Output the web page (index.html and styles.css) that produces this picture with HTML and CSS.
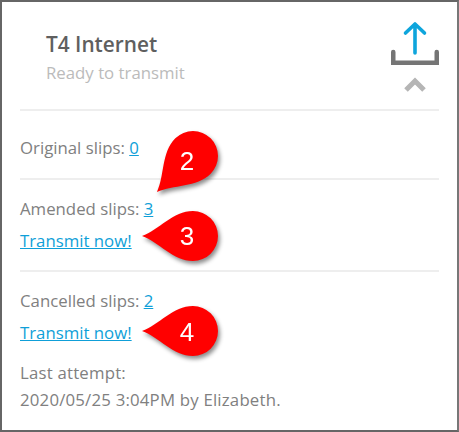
FILE: index.html
```html
<!DOCTYPE html>
<html lang="en">
<head>
<meta charset="utf-8">
<title>T4 Internet</title>
<link rel="stylesheet" href="styles.css">
</head>
<body>
<main class="card">
  <header class="head">
    <div class="titles">
      <h1 class="title">T4 Internet</h1>
      <p class="status">Ready to transmit</p>
    </div>
    <div class="icons">
      <svg class="upload" width="50" height="50" viewBox="0 0 50 50" aria-hidden="true">
        <path d="M26 6V35M16.500 15L26 6L35.500 15" fill="none" stroke="#0ea5dc" stroke-width="3.600" stroke-linecap="round" stroke-linejoin="round"/>
        <path d="M4.250 34V44.750H47.750V34" fill="none" stroke="#757575" stroke-width="4.500" stroke-linecap="round"/>
      </svg>
      <svg class="chevron" width="22" height="15" viewBox="0 0 22 15" aria-hidden="true">
        <path d="M2 13L11 4L20 13" fill="none" stroke="#b5b5b5" stroke-width="5"/>
      </svg>
    </div>
  </header>
  <section class="row row-original">
    <p class="line">Original slips: <a href="#">0</a></p>
  </section>
  <section class="row row-amended">
    <p class="line">Amended slips: <a href="#">3</a></p>
    <p class="line"><a href="#">Transmit now!</a></p>
  </section>
  <section class="row row-cancelled">
    <p class="line">Cancelled slips: <a href="#">2</a></p>
    <p class="line"><a href="#">Transmit now!</a></p>
    <p class="attempt">Last attempt:<br>2020/05/25 3:04PM by Elizabeth.</p>
  </section>
</main>

<svg class="pin pin-2" width="84" height="84" viewBox="0 0 84 84" aria-hidden="true">
  <path transform="rotate(-45 54 28)" d="M3 28C20 22 34 3 54 3A25 25 0 0 1 54 53C34 53 20 34 3 28Z" fill="#ff0000"/>
  <text x="48" y="42" class="pin-text">2</text>
</svg>
<svg class="pin pin-3" width="84" height="58" viewBox="0 0 84 58" aria-hidden="true">
  <path d="M3 28C20 22 34 3 54 3A25 25 0 0 1 54 53C34 53 20 34 3 28Z" fill="#ff0000"/>
  <text x="48" y="37" class="pin-text">3</text>
</svg>
<svg class="pin pin-4" width="84" height="58" viewBox="0 0 84 58" aria-hidden="true">
  <path d="M3 28C20 22 34 3 54 3A25 25 0 0 1 54 53C34 53 20 34 3 28Z" fill="#ff0000"/>
  <text x="48" y="38" class="pin-text">4</text>
</svg>
</body>
</html>
```
FILE: styles.css
```css
* { box-sizing: border-box; }
html, body { margin: 0; padding: 0; }
body {
  position: relative;
  width: 459px;
  height: 432px;
  overflow: hidden;
  background: #fff;
  font-family: "Open Sans", "Liberation Sans", sans-serif;
  color: #808080;
}
.card {
  width: 459px;
  height: 432px;
  border: 2px solid #666;
  border-right-color: #777;
  padding: 0 18px;
}
.head {
  height: 109px;
  display: flex;
  justify-content: space-between;
  border-bottom: 2px solid #eee;
  padding: 29px 0 0 26px;
}
.title {
  margin: 0;
  font-size: 20.800px;
  line-height: 26px;
  font-weight: 600;
  color: #5f5f5f;
}
.status {
  margin: 6px 0 0;
  font-size: 16.800px;
  line-height: 20px;
  color: #bbb;
}
.icons {
  display: flex;
  flex-direction: column;
  align-items: flex-end;
  margin-top: -13px;
}
.upload { display: block; }
.chevron { display: block; margin: 9px 13px 0 0; }
.row { border-bottom: 2px solid #eee; padding-top: 15px; }
.row-original { height: 69px; padding-top: 23px; }
.row-amended { height: 92px; }
.row-cancelled { border-bottom: 0; }
.line {
  margin: 0 0 5px;
  font-size: 16.800px;
  line-height: 27px;
}
.attempt {
  margin: 13px 0 0;
  font-size: 16.800px;
  line-height: 27px;
  letter-spacing: .2px;
}
a { color: #0f9fd8; text-decoration: underline; }
.pin {
  position: absolute;
  overflow: visible;
  filter: drop-shadow(2px 3px 2px rgba(0,0,0,.45));
}
.pin-2 { left: 139px; top: 128px; }
.pin-3 { left: 139px; top: 208px; }
.pin-4 { left: 139px; top: 303px; }
.pin-text {
  font-family: "Liberation Sans", sans-serif;
  font-size: 26px;
  fill: #fff;
  text-anchor: middle;
}
```
